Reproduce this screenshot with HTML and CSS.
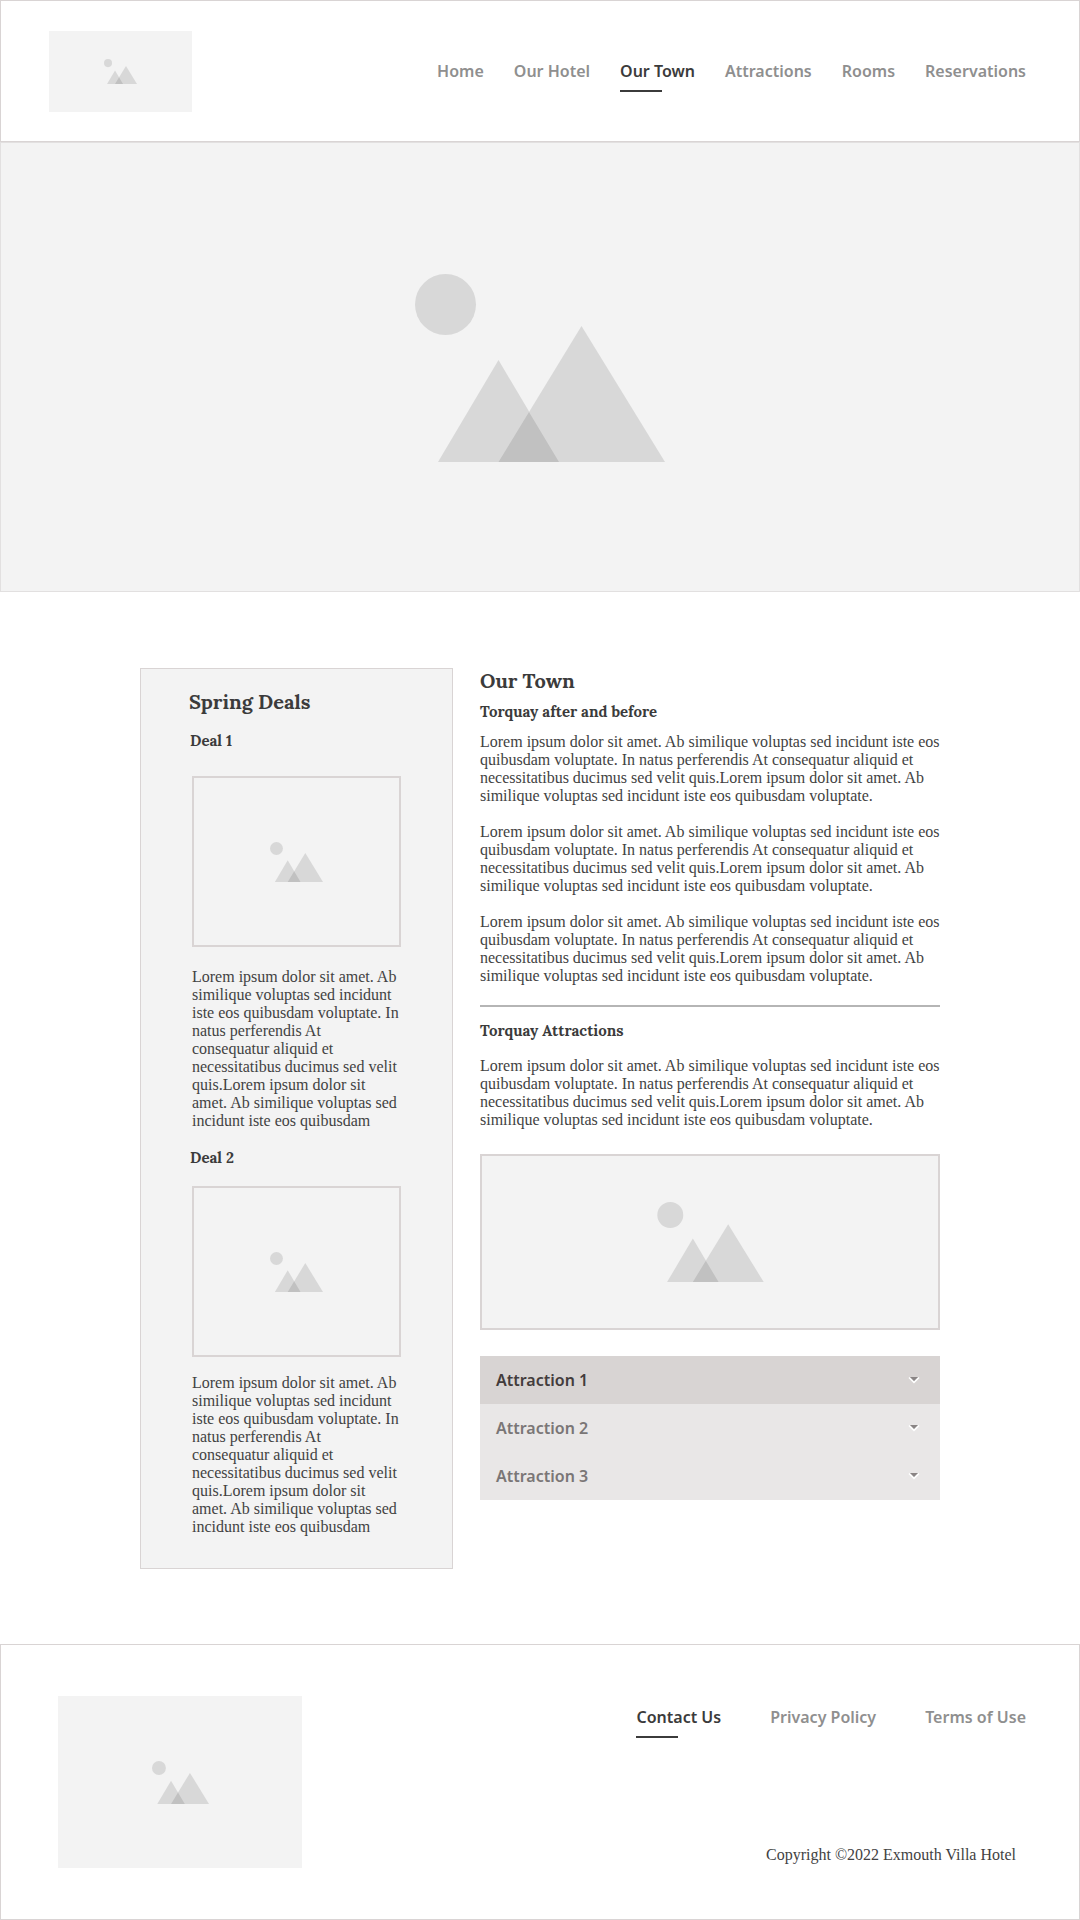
FILE: index.html
```html
<!DOCTYPE html>
<html lang="en">
<head>
  <meta charset="utf-8">
  <meta name="viewport" content="width=device-width, initial-scale=1">
  <title>Our Town - Exmouth Villa Hotel</title>
  <link rel="stylesheet" href="styles.css">
</head>
<body>
  <svg class="symbols" aria-hidden="true">
    <symbol id="picture" viewBox="0 0 250 188">
      <circle cx="30.5" cy="30.5" r="30.5" fill="#d8d8d8"/>
      <path d="M23 188 83.500 86 144 188z" fill="#d8d8d8"/>
      <path d="M83.500 188 166.500 52 250 188z" fill="#d8d8d8"/>
      <path d="M83.500 188 114 138 144 188z" fill="#c1c1c1"/>
    </symbol>
    <symbol id="caret" viewBox="0 0 12 8">
      <path d="M1 1.500 6 6.500 11 1.500" fill="none" stroke="#fff" stroke-width="1.500"/>
      <path d="M2 1H10L6 5z" fill="#8a8585"/>
    </symbol>
  </svg>

  <header class="site-header">
    <a class="logo" href="#" aria-label="Exmouth Villa Hotel"><svg class="icon-logo"><use href="#picture"/></svg></a>
    <nav class="nav header-nav" aria-label="Main">
      <a href="#">Home</a>
      <a href="#">Our Hotel</a>
      <a class="active" href="#">Our Town</a>
      <a href="#">Attractions</a>
      <a href="#">Rooms</a>
      <a href="#">Reservations</a>
    </nav>
  </header>

  <div class="hero"><svg class="icon-hero"><use href="#picture"/></svg></div>

  <div class="content">
    <aside class="deals">
      <h2>Spring Deals</h2>
      <section class="deal">
        <h3>Deal 1</h3>
        <div class="frame"><svg class="icon-deal"><use href="#picture"/></svg></div>
        <p>Lorem ipsum dolor sit amet. Ab similique voluptas sed incidunt iste eos quibusdam voluptate. In natus perferendis At consequatur aliquid et necessitatibus ducimus sed velit quis.Lorem ipsum dolor sit amet. Ab similique voluptas sed incidunt iste eos quibusdam</p>
      </section>
      <section class="deal">
        <h3>Deal 2</h3>
        <div class="frame"><svg class="icon-deal"><use href="#picture"/></svg></div>
        <p>Lorem ipsum dolor sit amet. Ab similique voluptas sed incidunt iste eos quibusdam voluptate. In natus perferendis At consequatur aliquid et necessitatibus ducimus sed velit quis.Lorem ipsum dolor sit amet. Ab similique voluptas sed incidunt iste eos quibusdam</p>
      </section>
    </aside>

    <main class="town">
      <h1>Our Town</h1>
      <section class="story">
        <h3>Torquay after and before</h3>
        <p>Lorem ipsum dolor sit amet. Ab similique voluptas sed incidunt iste eos quibusdam voluptate. In natus perferendis At consequatur aliquid et necessitatibus ducimus sed velit quis.Lorem ipsum dolor sit amet. Ab similique voluptas sed incidunt iste eos quibusdam voluptate.</p>
        <p>Lorem ipsum dolor sit amet. Ab similique voluptas sed incidunt iste eos quibusdam voluptate. In natus perferendis At consequatur aliquid et necessitatibus ducimus sed velit quis.Lorem ipsum dolor sit amet. Ab similique voluptas sed incidunt iste eos quibusdam voluptate.</p>
        <p>Lorem ipsum dolor sit amet. Ab similique voluptas sed incidunt iste eos quibusdam voluptate. In natus perferendis At consequatur aliquid et necessitatibus ducimus sed velit quis.Lorem ipsum dolor sit amet. Ab similique voluptas sed incidunt iste eos quibusdam voluptate.</p>
      </section>
      <hr>
      <section class="attractions">
        <h3>Torquay Attractions</h3>
        <p>Lorem ipsum dolor sit amet. Ab similique voluptas sed incidunt iste eos quibusdam voluptate. In natus perferendis At consequatur aliquid et necessitatibus ducimus sed velit quis.Lorem ipsum dolor sit amet. Ab similique voluptas sed incidunt iste eos quibusdam voluptate.</p>
        <div class="frame frame-wide"><svg class="icon-wide"><use href="#picture"/></svg></div>
        <div class="accordion">
          <button class="current" type="button">Attraction 1<svg class="caret"><use href="#caret"/></svg></button>
          <button type="button">Attraction 2<svg class="caret"><use href="#caret"/></svg></button>
          <button type="button">Attraction 3<svg class="caret"><use href="#caret"/></svg></button>
        </div>
      </section>
    </main>
  </div>

  <footer class="site-footer">
    <div class="footer-image"><svg class="icon-footer"><use href="#picture"/></svg></div>
    <div class="footer-info">
      <nav class="nav footer-nav" aria-label="Footer">
        <a class="active" href="#">Contact Us</a>
        <a href="#">Privacy Policy</a>
        <a href="#">Terms of Use</a>
      </nav>
      <p class="copyright">Copyright ©2022 Exmouth Villa Hotel</p>
    </div>
  </footer>
</body>
</html>
```
FILE: styles.css
```css
* {
  box-sizing: border-box;
}

body {
  margin: 0;
  background: #fff;
  color: #424242;
  font: 16px/18px "Liberation Serif", serif;
}

h1,
h2,
h3,
p {
  margin: 0;
}

h1,
h2,
h3 {
  color: #3b3b3b;
  font-family: Lora, "Liberation Serif", serif;
  font-weight: 700;
}

h1,
h2 {
  font-size: 20px;
  line-height: 26px;
}

h3 {
  font-size: 15px;
  line-height: 20px;
}

svg {
  display: block;
  flex: none;
}

.symbols {
  position: absolute;
  width: 0;
  height: 0;
}

/* Header and navigation */

.site-header {
  display: flex;
  justify-content: space-between;
  align-items: flex-start;
  padding: 30px 53px 29px 48px;
  border: 1px solid #d9d4d4;
}

.logo,
.hero,
.frame,
.footer-image {
  display: flex;
  justify-content: center;
  align-items: center;
  background: #f3f3f3;
}

.logo {
  width: 143px;
  height: 81px;
}

.nav {
  display: flex;
  font: 600 16px/22px "Noto Sans", sans-serif;
}

.nav a {
  color: #8f8f8f;
  text-decoration: none;
}

.nav .active {
  color: #3b3b3b;
}

.nav .active::after {
  content: "";
  display: block;
  width: 42px;
  height: 2px;
  margin-top: 8px;
  background: #3b3b3b;
}

.header-nav {
  gap: 30px;
  padding-top: 29px;
}

.hero {
  height: 450px;
  padding-top: 2px;
  border: 1px solid #e2e0e0;
}

.icon-logo {
  width: 33px;
  height: 25px;
}

.icon-hero {
  width: 250px;
  height: 188px;
}

.icon-deal {
  width: 53px;
  height: 40px;
}

.icon-wide {
  width: 107px;
  height: 80px;
}

.icon-footer {
  width: 57px;
  height: 43px;
}

/* Page content */

.content {
  display: grid;
  grid-template-columns: 313px 1fr;
  gap: 27px;
  max-width: 800px;
  margin: 76px auto 75px;
}

.deals {
  padding: 20px 51px 32px;
  background: #f3f3f3;
  border: 1px solid #d9d4d4;
}

.deals h2 {
  margin: 0 0 16px -3px;
}

.deals h3 {
  margin-left: -2px;
}

.deal + .deal {
  margin-top: 18px;
}

.deal .frame {
  height: 171px;
  margin: 18px 0 17px;
}

.deal:first-of-type .frame {
  margin: 25px 0 21px;
}

.frame {
  border: 2px solid #d9d4d4;
}

.town h1 {
  margin-bottom: 8px;
}

.story h3 {
  margin-bottom: 11px;
}

.story p + p {
  margin-top: 18px;
}

.town hr {
  height: 2px;
  margin: 20px 0 14px;
  border: 0;
  background: #b5b5b5;
}

.attractions h3 {
  margin-bottom: 16px;
}

.frame-wide {
  height: 176px;
  margin: 25px 0 26px;
}

.accordion {
  display: flex;
  flex-direction: column;
}

.accordion button {
  display: flex;
  justify-content: space-between;
  align-items: center;
  height: 48px;
  padding: 0 20px 0 16px;
  border: 0;
  background: #e9e7e7;
  color: #7a7676;
  font: 600 16px/22px "Noto Sans", sans-serif;
}

.accordion .current {
  background: #d8d4d3;
  color: #433c3c;
}

.caret {
  width: 12px;
  height: 8px;
}

/* Footer */

.site-footer {
  display: flex;
  justify-content: space-between;
  padding: 51px 53px 51px 57px;
  border: 1px solid #d9d4d4;
}

.footer-image {
  width: 244px;
  height: 172px;
}

.footer-info {
  display: flex;
  flex-direction: column;
  justify-content: space-between;
  align-items: flex-end;
  padding: 10px 0 4px;
}

.footer-nav {
  gap: 49px;
}

.copyright {
  padding-right: 10px;
}
```
